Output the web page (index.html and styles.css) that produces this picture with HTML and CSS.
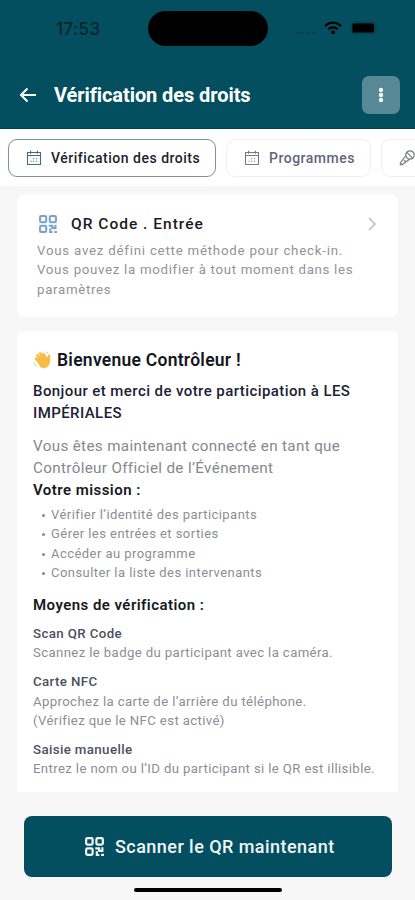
FILE: index.html
```html
<!DOCTYPE html>
<html lang="fr">
<head>
<meta charset="utf-8">
<title>Vérification des droits</title>
<link rel="stylesheet" href="styles.css">
</head>
<body>
<svg class="defs" aria-hidden="true">
  <symbol id="calendar" viewBox="0 0 16 16">
    <path d="M1.500 2.500h13v12h-13zM1.500 5.500h13M4.600 .8v3M11.400 .8v3" fill="none" stroke="currentColor" stroke-width="1.100"/>
    <path d="M7 8.600h1.200M10 8.600h1.200M4.500 11.400h1.200M7 11.400h1.200M10 11.400h1.200" stroke="currentColor" stroke-width="1.100" opacity=".7"/>
  </symbol>
  <symbol id="qr" viewBox="0 0 20 20">
    <g fill="none" stroke="currentColor" stroke-width="2.300">
      <rect x="1.200" y="1.200" width="6.800" height="6.800" rx="1.400"/>
      <rect x="12" y="1.200" width="6.800" height="6.800" rx="1.400"/>
      <rect x="1.200" y="12" width="6.800" height="6.800" rx="1.400"/>
      <path d="M10.800 12h4v3.500M12.500 15v4h2.600M18.300 10.800v3.800h-3M17 18.800h3"/>
    </g>
  </symbol>
</svg>
<div class="screen">
  <header class="top">
    <div class="status">
      <span class="time">17:53</span>
      <span class="island"></span>
      <span class="signals">
        <svg class="cell" viewBox="0 0 21 4"><path d="M1 2h4M6.500 2h3M12 2h3M17 2h3" stroke="#033b49" stroke-width="1.300"/></svg>
        <svg class="wifi" viewBox="0 0 18 14"><g fill="none" stroke="#000" stroke-width="2.300"><path d="M1 5.200C5.500.400 12.500.400 17 5.200"/><path d="M4.200 8.300c2.700-2.700 6.900-2.700 9.600 0"/></g><circle cx="9" cy="11.300" r="2" /></svg>
        <svg class="battery" viewBox="0 0 30 14"><rect x=".7" y=".7" width="25.600" height="12.600" rx="3.500" fill="#034454" stroke="#03495a"/><rect x="2.500" y="2.500" width="21.500" height="9" rx="1"/><path d="M28 5v4" stroke="#03424f" stroke-width="1.500"/></svg>
      </span>
    </div>
    <div class="appbar">
      <svg class="back" viewBox="0 0 18 16"><path d="M17 8H2M8.500 1.500 2 8l6.500 6.500" fill="none" stroke="#fff" stroke-width="2"/></svg>
      <h1>Vérification des droits</h1>
      <button class="more" aria-label="Menu"><svg viewBox="0 0 8 18"><circle cx="4" cy="4" r="2.200"/><circle cx="4" cy="9" r="2.200"/><circle cx="4" cy="14" r="2.200"/></svg></button>
    </div>
  </header>
  <nav class="tabs">
    <a class="tab active"><svg><use href="#calendar"/></svg><span>Vérification des droits</span></a>
    <a class="tab programmes"><svg><use href="#calendar"/></svg><span>Programmes</span></a>
    <a class="tab speakers"><svg viewBox="0 0 16 16"><g fill="none" stroke="currentColor" stroke-width="1.200"><circle cx="11" cy="5" r="4.200"/><path d="m6.800 5.500-5.500 7.400 1.800 1.800 7.400-5.500M7.800 2.300l5.900 5.900M5 10l1.500 1.500M.8 15.300l1.300-1.300"/></g></svg></a>
  </nav>
  <main>
    <section class="card method">
      <div class="method-head">
        <svg class="method-icon"><use href="#qr"/></svg>
        <h2>QR Code . Entrée</h2>
        <svg class="chevron" viewBox="0 0 10 14"><path d="m2 1 6 6-6 6" fill="none" stroke="#b4b6b9" stroke-width="1.400"/></svg>
      </div>
      <p><span class="lead">Vous avez défini cette méthode pour check-in.</span><br>Vous pouvez la modifier à tout moment dans les<br>paramètres</p>
    </section>
    <section class="card welcome">
      <h2><svg class="wave" viewBox="0 0 18 18"><path d="M3 7.500 7 12M4.500 4.300l4 5M7.200 2.600l4 5.600M10.500 3.200l3 5" fill="none" stroke="#f9c04d" stroke-width="2.900" stroke-linecap="round"/><path d="m3.500 9.500 8-5 2.600 2.800.5-2.400c.3-1.600 2.900-1.300 2.800.4-.2 4 .2 7.600-2.500 10.200-2.500 2.400-5.900 2.100-8-.1z" fill="#f9bd47"/><path d="m5.500 7.500 2.500 3M8 5.500l2.500 3.500" stroke="#e5a03c" stroke-width=".5"/><path d="M1 11.500c.4 1.700 1.500 3 3 3.800M12.500 1c1.400.2 2.300.8 2.900 1.600" fill="none" stroke="#b9c3ca" stroke-width="1"/></svg><span>Bienvenue Contrôleur !</span></h2>
      <p class="greeting">Bonjour et merci de votre participation à LES<br>IMPÉRIALES</p>
      <p class="connected">Vous êtes maintenant connecté en tant que<br>Contrôleur Officiel de l’Événement</p>
      <h3 class="mission">Votre mission :</h3>
      <ul>
        <li>Vérifier l’identité des participants</li>
        <li>Gérer les entrées et sorties</li>
        <li>Accéder au programme</li>
        <li>Consulter la liste des intervenants</li>
      </ul>
      <h3 class="means">Moyens de vérification :</h3>
      <div class="mean"><h4>Scan QR Code</h4><p>Scannez le badge du participant avec la caméra.</p></div>
      <div class="mean"><h4>Carte NFC</h4><p>Approchez la carte de l’arrière du téléphone.<br>(Vérifiez que le NFC est activé)</p></div>
      <div class="mean"><h4>Saisie manuelle</h4><p>Entrez le nom ou l’ID du participant si le QR est illisible.</p></div>
    </section>
  </main>
  <footer>
    <button class="scan"><svg><use href="#qr"/></svg><span>Scanner le QR maintenant</span></button>
    <div class="home"></div>
  </footer>
</div>
</body>
</html>
```
FILE: styles.css
```css
* { box-sizing: border-box; }
body { margin: 0; font-family: Roboto, sans-serif; }
h1, h2, h3, h4, p, ul { margin: 0; padding: 0; }
button { border: 0; padding: 0; font-family: inherit; }
svg { display: block; flex: none; }
span { white-space: nowrap; }
.defs { display: none; }
.screen { width: 415px; height: 900px; background: #f7f7f7; overflow: hidden; display: flex; flex-direction: column; }
.top { height: 129px; flex: none; background: #034f60; border-bottom: 1px solid #033f50; }
.status { height: 58px; display: grid; grid-template-columns: 148px 120px 1fr; }
.time { padding: 19px 0 0 56px; font: 500 17px/20px Inter, sans-serif; letter-spacing: .4px; color: #02262e; }
.island { height: 35px; margin-top: 11px; border-radius: 18px; background: #000; }
.signals { display: flex; align-items: center; height: 56px; padding-left: 27px; }
.cell { width: 21px; height: 4px; margin-top: 10px; }
.wifi { width: 18px; height: 14px; margin-left: 8px; }
.battery { width: 30px; height: 14px; margin-left: 8px; }
.appbar { display: flex; align-items: center; height: 74px; padding: 0 15px 0 19px; }
.back { width: 18px; height: 16px; }
h1 { flex: 1; margin-left: 17px; font-size: 20px; line-height: 24px; font-weight: 700; letter-spacing: -.08px; color: #fff; }
.more { width: 38px; height: 38px; border-radius: 7px; background: #568895; display: grid; place-items: center; }
.more svg { width: 8px; height: 18px; fill: #f1f6f7; }
.tabs { height: 57px; flex: none; background: #fff; display: flex; gap: 10px; padding: 10px 0 0 8px; }
.tab { height: 38px; flex: none; border: 1px solid #f0f0f1; border-radius: 9px; display: flex; align-items: center; padding-left: 17px; color: #777b80; font-size: 14px; font-weight: 500; }
.tab svg { width: 16px; height: 16px; margin-bottom: 1px; }
.tab span { margin-left: 9px; }
.active { width: 208px; border-color: #7c9398; color: #456b7a; }
.active span { color: #20232b; letter-spacing: .5px; }
.programmes { width: 145px; }
.programmes span { color: #62647a; letter-spacing: .5px; }
.speakers { width: 90px; }
main { padding: 8px 17px 0 17px; display: flex; flex-direction: column; gap: 14px; }
.card { background: #fff; border-radius: 8px; }
.method { height: 123px; padding: 20px 21px 0 20px; }
.method-head { display: flex; height: 20px; align-items: center; }
.method-icon { width: 18px; height: 18px; margin-left: 2px; color: #7da0cc; }
.method h2 { flex: 1; margin-left: 14px; font-size: 15.5px; line-height: 20px; font-weight: 500; color: #191b20; letter-spacing: 1px; }
.chevron { width: 10px; height: 14px; }
.method p { margin-top: 7px; font-size: 13.3px; line-height: 19.3px; color: #909398; letter-spacing: .68px; white-space: nowrap; }
.lead { letter-spacing: .76px; }
.welcome { height: 461px; border-radius: 6px 6px 0 0; padding: 18px 16px 0; }
.welcome h2 { display: flex; align-items: center; height: 22px; font-size: 17.5px; font-weight: 600; color: #14161e; letter-spacing: .26px; }
.wave { width: 18px; height: 18px; margin-right: 6px; }
.greeting { margin-top: 9px; font-size: 15px; line-height: 22px; font-weight: 500; color: #202134; letter-spacing: .42px; white-space: nowrap; }
.connected { margin-top: 11px; font-size: 15.2px; line-height: 22px; color: #85888d; letter-spacing: .35px; }
h3 { font-size: 15px; line-height: 22px; font-weight: 600; color: #17191d; letter-spacing: .45px; }
ul { list-style: none; margin-top: 4px; padding-left: 8px; font-size: 13px; line-height: 19.3px; color: #8b8e93; letter-spacing: .45px; }
li { display: flex; align-items: center; }
li::before { content: ""; width: 3px; height: 3px; border-radius: 50%; background: #85888d; margin: 2px 6px 0 1px; }
.means { margin-top: 12px; margin-bottom: 8px; }
.mean { font-size: 13.2px; line-height: 19.3px; color: #8b8e93; margin-bottom: 9.500px; letter-spacing: .37px; white-space: nowrap; }
h4 { font-size: 13.3px; font-weight: 500; color: #4c5061; }
footer { margin-top: 24px; padding: 0 23px 0 24px; }
.scan { width: 100%; height: 61px; border-radius: 8px; background: #034f60; color: #f0f5f7; display: flex; align-items: center; padding-left: 61px; font-size: 18px; font-weight: 500; letter-spacing: .45px; }
.scan svg { width: 19px; height: 19px; margin-right: 11px; }
.home { width: 148px; height: 4px; margin: 11px auto 0; border-radius: 2px; background: #000; }
```
